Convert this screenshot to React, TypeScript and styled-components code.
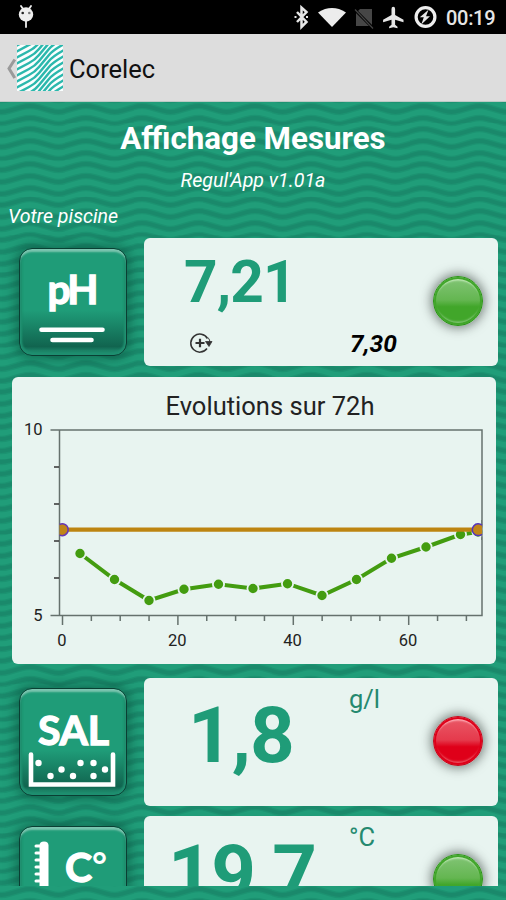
import React from "react";
import styled, { createGlobalStyle } from "styled-components";

const GREEN = "#1f9c78";
const PALE = "#e8f4f0";

const wave = (y: number) =>
  `<path d="M-28.1 ${y + 6}Q-25 ${y + 6} -21 ${y + 4.6}L-8 ${y + 1}Q0 ${y - 1} 8 ${y + 1}L21 ${y + 4.6}Q28.1 ${y + 7} 35.2 ${y + 4.6}L48.2 ${y + 1}Q56.2 ${y - 1} 64.2 ${y + 1}"/>`;

const waveTile = encodeURIComponent(
  `<svg xmlns="http://www.w3.org/2000/svg" width="56.2" height="11.7" viewBox="0 0 56.2 11.7"><rect width="56.2" height="11.7" fill="#209d79"/><g fill="none" stroke="#1b9371" stroke-width="6.4">${wave(-9.7)}${wave(2)}${wave(13.7)}</g><g fill="none" stroke="#1a896b" stroke-width="3.8">${wave(-9.7)}${wave(2)}${wave(13.7)}</g></svg>`
);

const GlobalStyle = createGlobalStyle`
  * { box-sizing: border-box; }
  body { margin: 0; background: ${GREEN}; font-family: Roboto, "Liberation Sans", sans-serif; }
`;

const Screen = styled.div`
  width: 506px;
  height: 900px;
  display: flex;
  flex-direction: column;
  overflow: hidden;
  background: #000;
`;

const StatusBar = styled.header`
  height: 34px;
  flex: none;
  display: flex;
  align-items: center;
  justify-content: space-between;
  padding: 0 10px 0 17px;
  color: #e6e6e6;
`;

const StatusIcons = styled.div`
  display: flex;
  align-items: center;
`;

const Clock = styled.time`
  width: 50px;
  margin-left: 7.5px;
  padding-top: 2px;
  font-size: 20px;
  font-weight: 500;
  letter-spacing: -0.3px;
  white-space: nowrap;
`;

const ActionBar = styled.nav`
  height: 68px;
  flex: none;
  display: flex;
  align-items: center;
  padding: 0 0 0 6px;
  background: #dddddd;
  border-bottom: 1px solid #bccac5;
`;

const AppName = styled.h1`
  margin: 3px 0 0 6px;
  font-size: 25.5px;
  font-weight: 400;
  color: #111;
`;

const Content = styled.main`
  flex: 1;
  min-height: 0;
  padding-bottom: 14px;
  background: ${GREEN} url("data:image/svg+xml,${waveTile}") 30px 2px;
`;

const Viewport = styled.div`
  height: 784px;
  overflow: hidden;
  display: flex;
  flex-direction: column;
`;

const Heading = styled.h2`
  margin: 18px 0 0;
  line-height: 38px;
  text-align: center;
  color: #fff;
  font-size: 31.3px;
  font-weight: 700;
`;

const Caption = styled.p<{ $align: "center" | "left"; $top: number }>`
  margin: ${(p) => p.$top}px 0 0;
  padding: 0 8px;
  line-height: 24px;
  text-align: ${(p) => p.$align};
  color: #fff;
  font-size: 19.6px;
  font-style: italic;
`;

const MeasureRow = styled.section<{ $top: number }>`
  flex: none;
  display: flex;
  align-items: flex-start;
  height: 128px;
  margin: ${(p) => p.$top}px 8px 0 19px;
`;

const Tile = styled.div`
  flex: none;
  width: 108px;
  height: 108px;
  margin: 10px 17px 0 0;
  border-radius: 13px;
  border: 1.5px solid #0a3f33;
  background: linear-gradient(180deg, ${GREEN} 0 58%, #11644f 92%, #1b8065 96%);
  box-shadow: 0 0 12px 3px rgba(8, 75, 57, 0.55), inset 0 4px 2px -1px #7cc6b0,
    inset 0 -2px 3px 1px #1f8f70, inset 0 0 2px 2px #1d8d6d;
`;

const Card = styled.div`
  flex: 1;
  height: 128px;
  display: grid;
  grid-template-columns: 205px 84px 65px;
  background: ${PALE};
  border-radius: 6px;
`;

const Reading = styled.div`
  display: flex;
  flex-direction: column;
`;

const Value = styled.strong<{ $size: number; $left: number; $top: number; $gap: number }>`
  height: ${(p) => p.$size}px;
  margin: ${(p) => p.$top}px 0 0 ${(p) => p.$left}px;
  font-size: ${(p) => p.$size}px;
  line-height: 1;
  letter-spacing: ${(p) => p.$gap}px;
  white-space: nowrap;
  color: ${GREEN};
`;

const Unit = styled.span`
  margin-top: 6px;
  font-size: 25.5px;
  line-height: 30px;
  color: #25896f;
`;

const Setpoint = styled.span`
  align-self: end;
  margin: 0 0 7px 1px;
  font-size: 24.5px;
  line-height: 30px;
  font-weight: 700;
  font-style: italic;
  color: #000;
`;

const Lamp = styled.i<{ $rim: string; $dark: string; $mid: string; $light: string; $edge: string }>`
  width: 50px;
  height: 50px;
  margin: 38px 0 0;
  border-radius: 50%;
  border: 1.5px solid ${(p) => p.$rim};
  background: linear-gradient(180deg, ${(p) => p.$light}, ${(p) => p.$mid} 48%, ${(p) => p.$dark} 62%);
  box-shadow: 0 0 11px 2px rgba(40, 50, 45, 0.6), inset 0 0 0 2px ${(p) => p.$dark},
    inset 0 4px 2px -0.5px ${(p) => p.$edge}, inset 0 -4px 2px -0.5px ${(p) => p.$light};
`;

const ChartCard = styled.section`
  flex: none;
  height: 287px;
  margin: 11px 10px 0 11.5px;
  background: ${PALE};
  border-radius: 6px;
`;

const green = { $rim: "#2c9318", $dark: "#41a62a", $mid: "#64b651", $light: "#83c577", $edge: "#c2eab8" };
const red = { $rim: "#c20a1d", $dark: "#df0019", $mid: "#e53a4c", $light: "#ea5a68", $edge: "#ffb3bc" };

const AndroidIcon = () => (
  <svg width="18" height="24" viewBox="0 0 18 24">
    <path d="M4 1l2 3M14 1l-2 3M9 15v7" stroke="#eee" strokeWidth="1.8" strokeLinecap="round" />
    <circle cx="9" cy="9.5" r="7.2" fill="#eee" />
    <circle cx="5.7" cy="8" r="1.3" fill="#222" />
    <circle cx="12.3" cy="8" r="1.3" fill="#777" />
  </svg>
);

const StatusGlyphs = () => (
  <svg width="145" height="28" viewBox="0 0 145 28">
    <path d="M2 9l9.5 10-5 5V4.5l5 4.500L2 19" transform="translate(1 0)" fill="none" stroke="#e6e6e6" strokeWidth="2.500" />
    <path d="M0.500 14h2M12 14h2" stroke="#e6e6e6" strokeWidth="2" />
    <path d="M24 9.400Q38 .5 52 9.400L38 24z" fill="#ececec" />
    <path d="M66 6h12v17H62V10z" fill="#464646" />
    <path d="M60 6l19 19" stroke="#000" strokeWidth="3" />
    <path d="M61 6.500l18 19" stroke="#444" strokeWidth="1.200" />
    <path transform="translate(88.500 3)" d="M10.800.8q1.800 0 1.800 2.200v6l8.400 4.800v2.400l-8.400-2.400v5l2.400 2v1.400l-4.200-1-4.200 1v-1.400l2.400-2v-5L.6 16.200v-2.400L9 9V3q0-2.200 1.800-2.200z" fill="#e6e6e6" />
    <circle cx="131.500" cy="14" r="9.400" fill="none" stroke="#eee" strokeWidth="3.200" />
    <path d="M134.500 6.800l-8.700 7.400h4l-2.500 7.300 8.700-8.300h-4z" fill="#e6e6e6" />
  </svg>
);

const BackChevron = () => (
  <svg width="11" height="24" viewBox="0 0 11 24">
    <path d="M8.800 3.500L3 12.500l5.800 9.500" fill="none" stroke="#9a9a9a" strokeWidth="3" />
  </svg>
);

const CorelecLogo = () => (
  <svg width="46" height="46" viewBox="0 0 46 46">
    <rect width="46" height="46" fill="#fafefe" />
    <g fill="none" stroke="#2bb8ad" strokeWidth="2.500">
      {Array.from({ length: 16 }, (_, i) => (
        <path key={i} d={`M-3 ${i * 6 + 2}L12 ${i * 6 - 6}Q18 ${i * 6 - 9} 22 ${i * 6 - 14}L32 ${i * 6 - 26}Q36 ${i * 6 - 31} 49 ${i * 6 - 38}`} />
      ))}
    </g>
  </svg>
);

const PhGlyph = () => (
  <svg width="105" height="105" viewBox="1.500 1.500 105 105" fill="#fff">
    <text x="29" y="56.500" fontFamily="Lato, sans-serif" fontWeight="700" fontSize="40.500" textLength="51" stroke="#fff" strokeWidth="1.300">pH</text>
    <path d="M23 82.200H84M34 92.500H73" stroke="#fff" strokeWidth="4.600" strokeLinecap="round" />
  </svg>
);

const grains = [[20, 83], [32, 96], [43, 89.5], [54.5, 96], [62, 83], [75, 83], [75, 96], [86.5, 89.5]];

const SaltGlyph = () => (
  <svg width="105" height="105" viewBox="1.500 9 105 105" fill="#fff">
    <text x="19.500" y="65" fontFamily="Lato, sans-serif" fontWeight="700" fontSize="41" textLength="71" stroke="#fff" strokeWidth="1.300">SAL</text>
    <path d="M12.500 74.500v30h82v-30" fill="none" stroke="#fff" strokeWidth="4.600" strokeLinecap="round" />
    {grains.map(([x, y]) => <circle key={`${x}-${y}`} cx={x} cy={y} r="3.200" />)}
  </svg>
);

const TempGlyph = () => (
  <svg width="105" height="105" viewBox="1.500 1.500 105 105" fill="#fff">
    <path d="M21 20q0-4 4.500-4t4.500 4v84h-9z" />
    <path d="M21 20.500h-3.500M21 27.500h-3.500M21 34.500h-3.500M21 41.500h-3.500M21 48.500h-3.500M21 55.500h-3.500M21 62.500h-3.500" stroke="#fff" strokeWidth="3" strokeLinecap="round" />
    <text x="46.500" y="56" fontFamily="Lato, sans-serif" fontWeight="700" fontSize="41" textLength="27" stroke="#fff" strokeWidth="1.300">C</text>
    <text x="73.500" y="52.500" fontFamily="Lato, sans-serif" fontWeight="700" fontSize="36">°</text>
  </svg>
);

const RegulationIcon = styled.svg`
  display: block;
  margin: 20px 0 0 45px;
`;

const series: [number, number][] = [
  [79.5, 553.5], [114, 579.5], [148.5, 600.5], [183.5, 589.3], [218, 584.2], [252.5, 588.5],
  [287, 583.7], [321.5, 595.5], [356, 579.5], [391, 558.3], [425.5, 547], [460, 534.5], [477.5, 532],
];

const Chart = () => (
  <svg width="484" height="287" viewBox="11.500 377 484 287" fontFamily="Roboto, sans-serif" fill="#222">
    <text x="165" y="414.500" fontSize="25.500" textLength="209">Evolutions sur 72h</text>
    <g stroke="#65716d" fill="none" strokeWidth="1.500">
      <path d="M50 430H481.500V615.500H50M59 430V615.500" />
      <path d="M53.500 467h5M53.500 504h5M53.500 541h5M53.500 578h5" stroke="#333" />
      {Array.from({ length: 15 }, (_, i) => (
        <path key={i} d={`M${62 + i * 28.85} 616v${i % 4 === 0 ? 9 : 5}`} />
      ))}
    </g>
    <g fontSize="16.500">
      <text x="42" y="435" textAnchor="end">10</text>
      <text x="42" y="620.500" textAnchor="end">5</text>
      {[0, 20, 40, 60].map((v) => (
        <text key={v} x={61.3 + v * 5.77} y="645.500" textAnchor="middle">{v}</text>
      ))}
    </g>
    <polyline points={series.map((p) => p.join()).join(" ")} fill="none" stroke="#439c10" strokeWidth="4" />
    {series.map(([x, y]) => <circle key={x} cx={x} cy={y} r="5.600" fill="#439c10" stroke={PALE} strokeWidth="1.800" />)}
    <path d="M481.500 520v20" stroke="#65716d" strokeWidth="1.500" />
    <path d="M482.300 520v20h2.700v-20z" fill={PALE} />
    <path d="M62 529.700H477.500" stroke="#bd8410" strokeWidth="4.200" />
    <path d="M59 524.500a5.900 5.900 0 1 1 0 10.400z" fill="#c08518" />
    <path d="M59 524.500a5.900 5.900 0 1 1 0 10.400" fill="none" stroke="#6638b5" strokeWidth="1.500" />
    <path d="M481.500 525.200a5.900 5.900 0 1 0 0 9" fill="#c08518" stroke="#5335bd" strokeWidth="1.500" />
  </svg>
);

export default function App() {
  return (
    <>
      <GlobalStyle />
      <Screen>
        <StatusBar>
          <AndroidIcon />
          <StatusIcons>
            <StatusGlyphs />
            <Clock>00:19</Clock>
          </StatusIcons>
        </StatusBar>
        <ActionBar>
          <BackChevron />
          <CorelecLogo />
          <AppName>Corelec</AppName>
        </ActionBar>
        <Content>
          <Viewport>
            <Heading>Affichage Mesures</Heading>
            <Caption $align="center" $top={11}>Regul'App v1.01a</Caption>
            <Caption $align="left" $top={12}>Votre piscine</Caption>
            <MeasureRow $top={9}>
              <Tile><PhGlyph /></Tile>
              <Card>
                <Reading>
                  <Value $size={58.5} $left={40} $top={15} $gap={-0.8}>7,21</Value>
                  <RegulationIcon width="24" height="22" viewBox="0 0 24 22" fill="none" stroke="#333" strokeWidth="1.500">
                    <path d="M18.500 6.500A9 9 0 1 0 18 16.500" />
                    <path d="M6.500 11h9M11 6.700v8.600" strokeWidth="2.200" />
                    <path d="M19 5.500q2 2 2 5M16.500 9.500h6.500l-3 5z" fill="#333" strokeWidth="0.800" />
                  </RegulationIcon>
                </Reading>
                <Setpoint>7,30</Setpoint>
                <Lamp {...green} />
              </Card>
            </MeasureRow>
            <ChartCard><Chart /></ChartCard>
            <MeasureRow $top={13.500}>
              <Tile><SaltGlyph /></Tile>
              <Card>
                <Value $size={78} $left={44} $top={19} $gap={-1}>1,8</Value>
                <Unit>g/l</Unit>
                <Lamp {...red} />
              </Card>
            </MeasureRow>
            <MeasureRow $top={10.500}>
              <Tile><TempGlyph /></Tile>
              <Card>
                <Value $size={78} $left={24} $top={19} $gap={-1.5}>19,7</Value>
                <Unit>°C</Unit>
                <Lamp {...green} />
              </Card>
            </MeasureRow>
          </Viewport>
        </Content>
      </Screen>
    </>
  );
}
